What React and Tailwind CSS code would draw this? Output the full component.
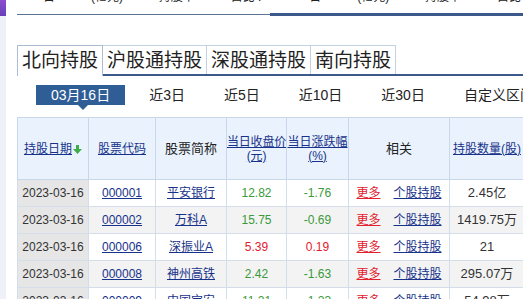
import React from 'react';

const rows = [
    { date: '2023-03-16', code: '000001', name: '平安银行', price: '12.82', change: '-1.76', qty: '2.45亿', up: false },
    { date: '2023-03-16', code: '000002', name: '万科A', price: '15.75', change: '-0.69', qty: '1419.75万', up: false },
    { date: '2023-03-16', code: '000006', name: '深振业A', price: '5.39', change: '0.19', qty: '21', up: true },
    { date: '2023-03-16', code: '000008', name: '神州高铁', price: '2.42', change: '-1.63', qty: '295.07万', up: false },
    { date: '2023-03-16', code: '000009', name: '中国宝安', price: '11.21', change: '-1.23', qty: '54.98万', up: false },
];

const tabs = ['北向持股', '沪股通持股', '深股通持股', '南向持股'];
const ranges = ['近3日', '近5日', '近10日', '近30日', '自定义区间'];

const SortArrow = () => (
    <svg width="9" height="9" viewBox="0 0 9 9" className="inline-block ml-[1px] align-[-1px]">
        <path d="M3 0h3v4h3L4.5 9 0 4h3z" fill="#3fae49" />
    </svg>
);

const App = () => {
    return (
        <div className="flex w-[523px] h-[299px] overflow-hidden bg-white font-['Liberation_Sans','Noto_Sans_CJK_SC',sans-serif] text-[#333]">
            {/* left strip */}
            <div className="w-[6px] shrink-0 bg-[#eef1f6]">
                <div className="h-[16px] bg-gradient-to-b from-[#8a4fd0] to-[#6a3fb8]" />
            </div>

            <div className="flex-1 pl-[11px] min-w-0">
                {/* clipped text of the block above */}
                <div className="h-[5px] overflow-hidden">
                    <div className="-mt-[10px] flex justify-between pl-[14px] pr-[2px] text-[12px] leading-[14px] text-[#222] whitespace-nowrap">
                        <span>一日</span>
                        <span>(亿元)</span>
                        <span>持股市</span>
                        <span>占比 .</span>
                        <span>一日</span>
                        <span>(亿元)</span>
                        <span>持股市</span>
                        <span>占比</span>
                    </div>
                </div>

                {/* section rule */}
                <div className="mt-[8px] flex items-center h-[3px]">
                    <div className="w-[253px] h-px bg-[#5d7594]" />
                    <div className="flex-1 h-[3px] bg-[#3b5a8b]" />
                </div>

                {/* tabs */}
                <div className="mt-[29px] flex border-b-2 border-[#3b5a8b] h-[31px]">
                    {tabs.map((t, i) => (
                        <div
                            key={t}
                            className={
                                i === 0
                                    ? 'px-[4px] border border-b-0 border-[#aabdd3] bg-white text-[19px] leading-[29px] text-[#222] -mb-[2px] h-[31px]'
                                    : 'px-[4px] border border-b-0 border-l-0 border-[#c3d2e3] bg-white text-[19px] leading-[29px] text-[#222]'
                            }
                        >
                            {t}
                        </div>
                    ))}
                </div>

                {/* date ranges */}
                <div className="mt-[9px] flex gap-[9px] pl-[19px] text-[14px] leading-[20px] whitespace-nowrap">
                    <div className="relative px-[15px] bg-[#2f5e96] text-white">
                        03月16日
                        <span className="absolute left-[42px] top-[20px] w-0 h-0 border-x-[5px] border-x-transparent border-t-[5px] border-t-[#2f5e96]" />
                    </div>
                    {ranges.map((r) => (
                        <div key={r} className="px-[15px] text-[#222]">{r}</div>
                    ))}
                </div>

                {/* table */}
                <table className="mt-[12px] table-fixed border-collapse w-[507px] text-[12px] text-center">
                    <colgroup>
                        <col className="w-[71px]" />
                        <col className="w-[67px]" />
                        <col className="w-[71px]" />
                        <col className="w-[60px]" />
                        <col className="w-[62px]" />
                        <col className="w-[101px]" />
                        <col className="w-[75px]" />
                    </colgroup>
                    <thead>
                        <tr className="h-[62px] bg-[#eaf3fd] leading-[14px]">
                            <th className="font-normal border border-[#c8d8ea] whitespace-nowrap">
                                <span className="underline text-[#17328a]">持股日期</span>
                                <SortArrow />
                            </th>
                            <th className="font-normal border border-[#c8d8ea]">
                                <span className="underline text-[#17328a]">股票代码</span>
                            </th>
                            <th className="font-normal border border-[#c8d8ea] text-[13px] text-[#222]">股票简称</th>
                            <th className="font-normal border border-[#c8d8ea] whitespace-nowrap tracking-[-0.2px]">
                                <span className="underline text-[#17328a]">当日收盘价<br />(元)</span>
                            </th>
                            <th className="font-normal border border-[#c8d8ea] whitespace-nowrap">
                                <span className="underline text-[#17328a]">当日涨跌幅<br />(%)</span>
                            </th>
                            <th className="font-normal border border-[#c8d8ea] text-[13px] text-[#222]">相关</th>
                            <th className="font-normal border border-[#c8d8ea] whitespace-nowrap">
                                <span className="underline text-[#17328a]">持股数量(股)</span>
                            </th>
                        </tr>
                    </thead>
                    <tbody>
                        {rows.map((row, idx) => {
                            const tone = row.up ? 'text-[#e2202e]' : 'text-[#3a9a3a]';
                            const bg = idx % 2 === 1 ? 'bg-[#f3f3f3]' : 'bg-white';
                            return (
                                <tr key={row.code} className={`h-[27px] ${bg}`}>
                                    <td className="border border-[#d3deea] bg-[#e6e6e6] text-[#333]">{row.date}</td>
                                    <td className="border border-[#d3deea]">
                                        <span className="underline text-[#17328a]">{row.code}</span>
                                    </td>
                                    <td className="border border-[#d3deea]">
                                        <span className="underline text-[#17328a]">{row.name}</span>
                                    </td>
                                    <td className={`border border-[#d3deea] ${tone}`}>{row.price}</td>
                                    <td className={`border border-[#d3deea] ${tone}`}>{row.change}</td>
                                    <td className="border border-[#d3deea] whitespace-nowrap">
                                        <span className="underline text-[#e2202e]">更多</span>
                                        <span className="underline text-[#17328a] ml-[13px]">个股持股</span>
                                    </td>
                                    <td className="border border-[#d3deea] text-[13px] text-[#333] whitespace-nowrap">{row.qty}</td>
                                </tr>
                            );
                        })}
                    </tbody>
                </table>
            </div>
        </div>
    );
};

export default App;
